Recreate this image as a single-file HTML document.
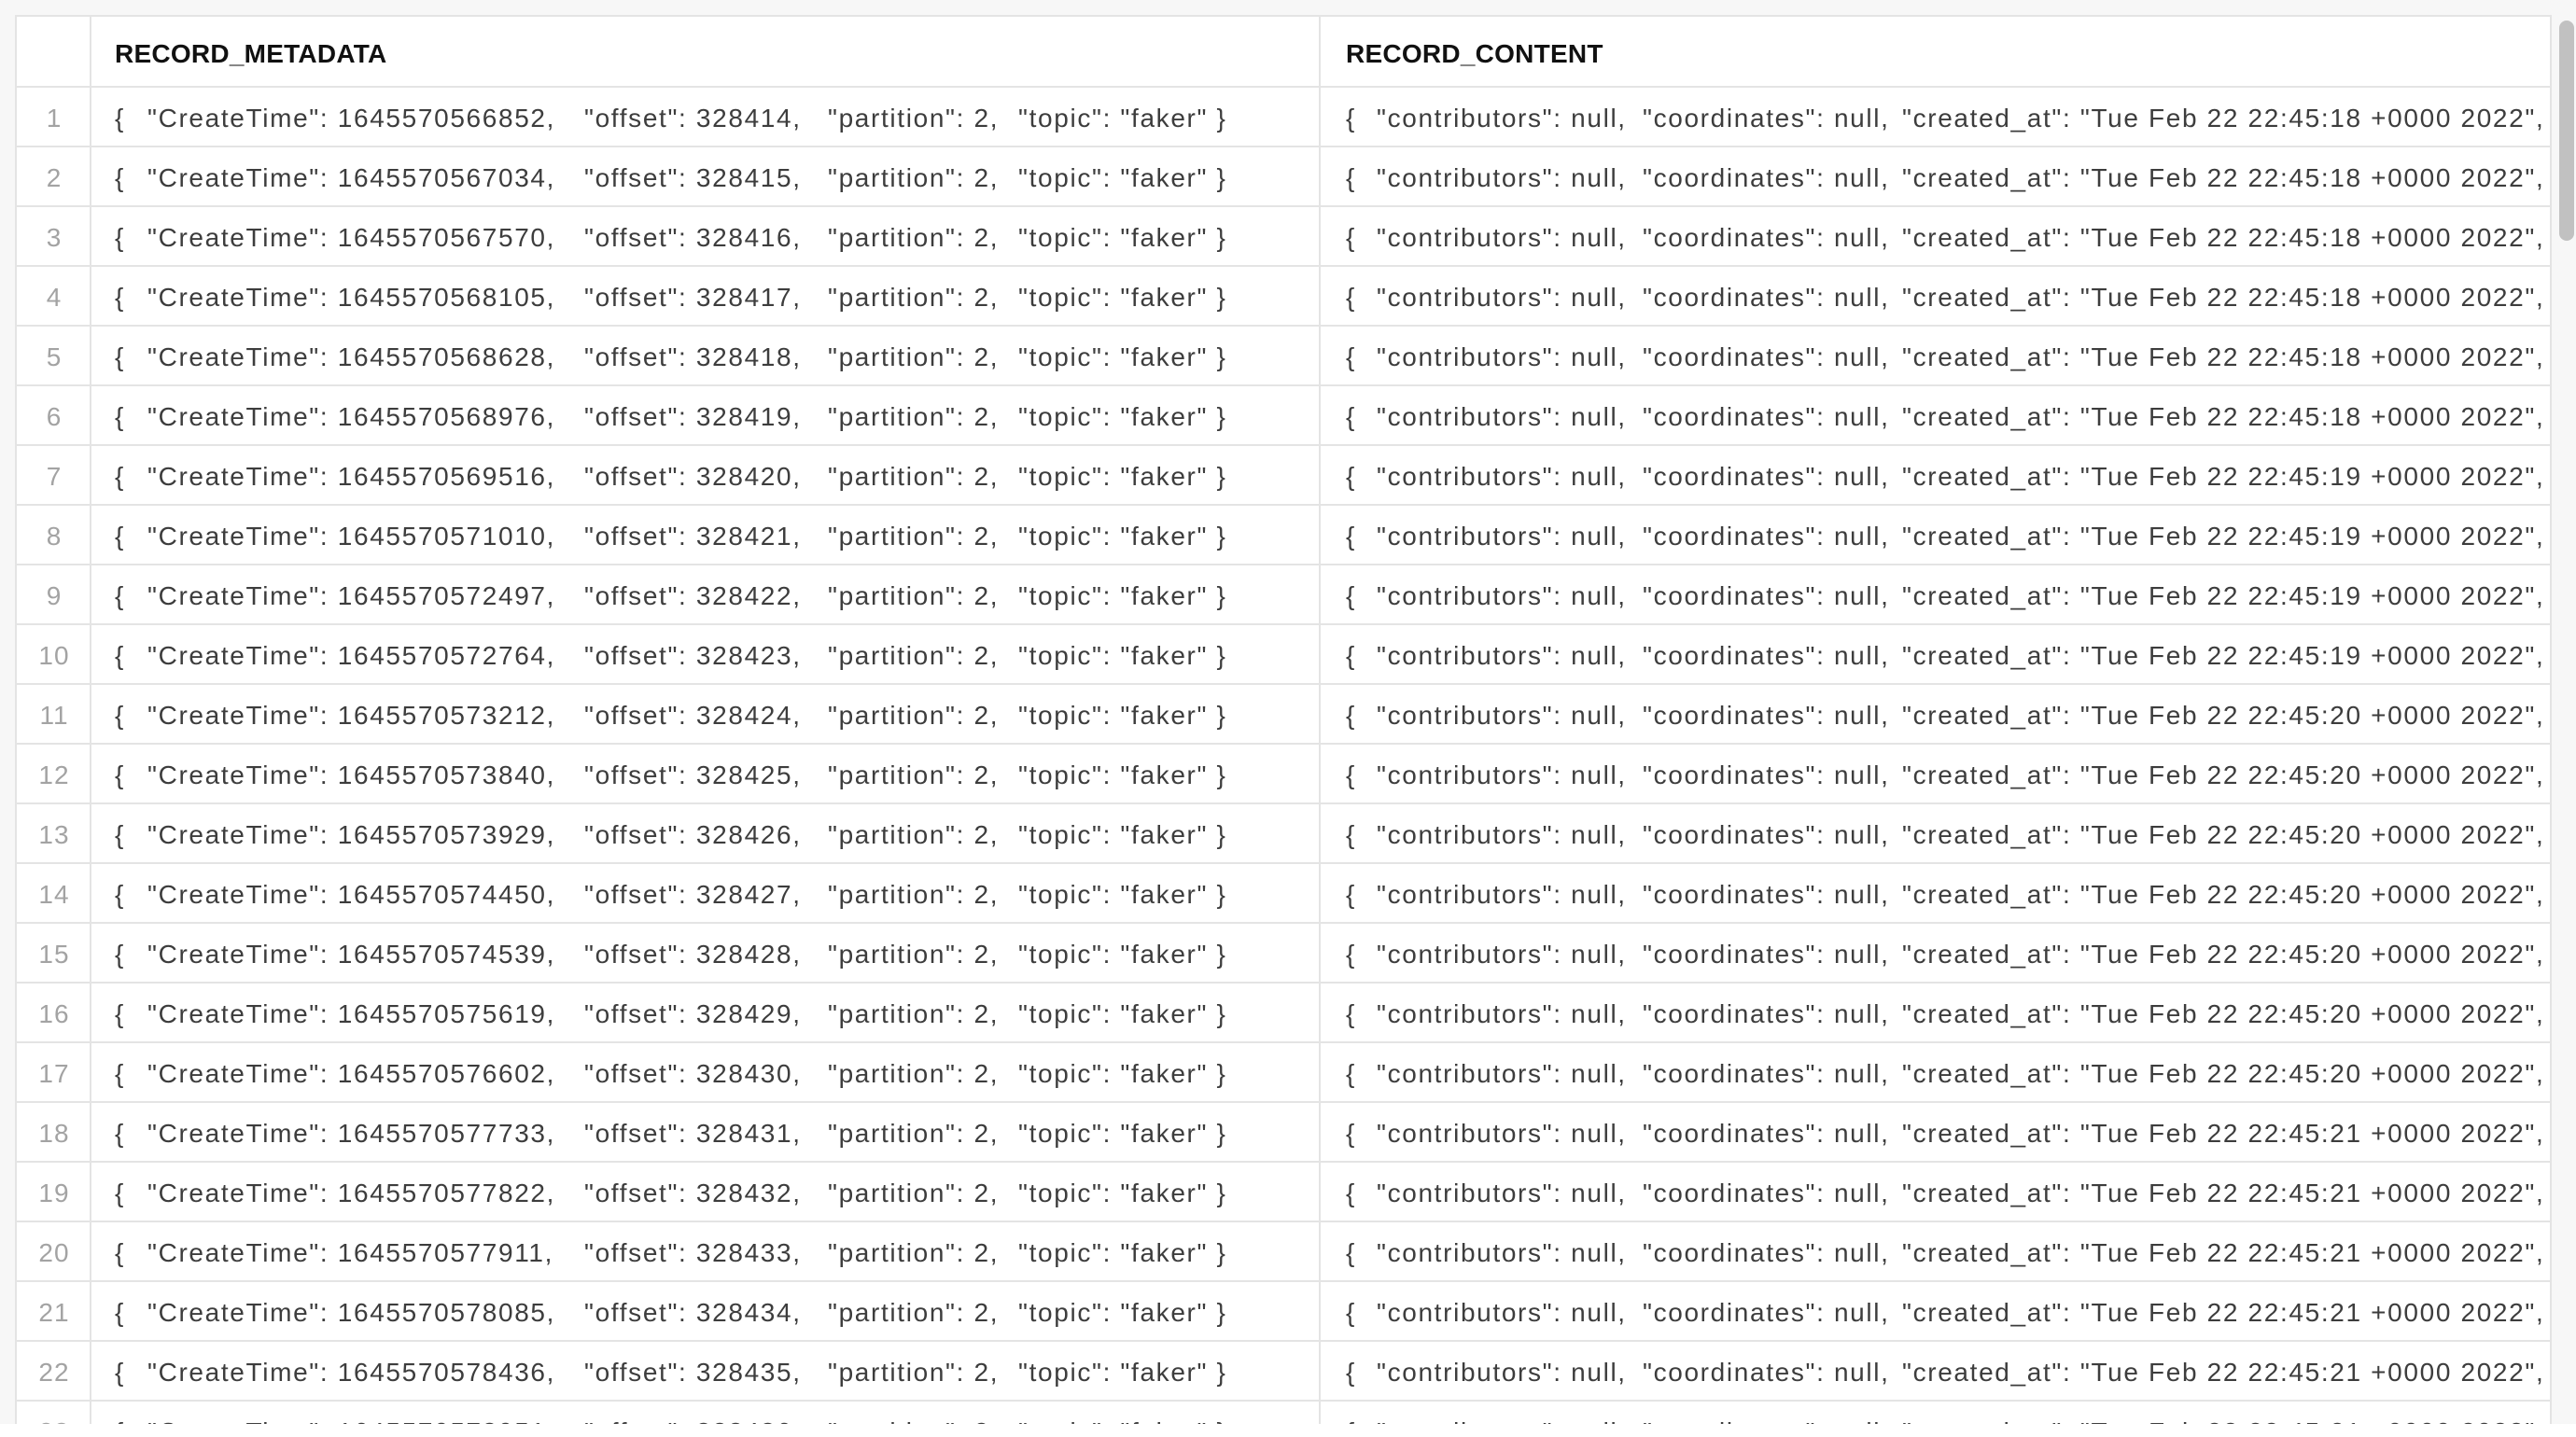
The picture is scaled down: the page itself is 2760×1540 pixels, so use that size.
<!DOCTYPE html>
<html><head><meta charset="utf-8"><style>
*{margin:0;padding:0;box-sizing:border-box}
body{width:2760px;height:1540px;background:#fff;position:relative;overflow:hidden;font-family:"Liberation Sans",sans-serif}
.bgtop{position:absolute;left:0;top:0;width:2760px;height:1526px;background:#f7f7f7}
.tbl{position:absolute;left:16px;top:16px;width:2718px;height:1510px;background:#fff;border:2px solid #e4e4e4;border-bottom:none;overflow:hidden}
.vl{position:absolute;top:0;bottom:0;width:2px;background:#e4e4e4}
.r{position:absolute;left:0;width:2718px;height:64px;border-bottom:2px solid #e4e4e4;font-size:28px;color:#3d3d3d;letter-spacing:1.65px}
.r span{position:absolute;top:17px;white-space:pre;line-height:32px}
.h{height:76px;top:0;font-weight:bold;color:#111;font-size:28px;letter-spacing:0.25px}
.h span{top:24px}
.n{left:0;width:80px;text-align:center;color:#a3a3a3;letter-spacing:1px}
.a{left:105px}.b{left:140px}.c{left:608px}.d{left:869px}.e{left:1073px}
.f{left:1424px}.g{left:1457px}.i{left:1742px}.j{left:2020px}
.sb{position:absolute;left:2742px;top:22px;width:16px;height:236px;border-radius:8px;background:#c1c1c1}
</style></head><body>
<div class="bgtop"></div>
<div class="tbl">
<div class="r h"><span class="a">RECORD_METADATA</span><span class="f">RECORD_CONTENT</span></div>
<div class="r" style="top:76px"><span class="n">1</span><span class="a">{</span><span class="b">"CreateTime": 1645570566852,</span><span class="c">"offset": 328414,</span><span class="d">"partition": 2,</span><span class="e">"topic": "faker" }</span><span class="f">{</span><span class="g">"contributors": null,</span><span class="i">"coordinates": null,</span><span class="j">"created_at": "Tue Feb 22 22:45:18 +0000 2022",</span></div>
<div class="r" style="top:140px"><span class="n">2</span><span class="a">{</span><span class="b">"CreateTime": 1645570567034,</span><span class="c">"offset": 328415,</span><span class="d">"partition": 2,</span><span class="e">"topic": "faker" }</span><span class="f">{</span><span class="g">"contributors": null,</span><span class="i">"coordinates": null,</span><span class="j">"created_at": "Tue Feb 22 22:45:18 +0000 2022",</span></div>
<div class="r" style="top:204px"><span class="n">3</span><span class="a">{</span><span class="b">"CreateTime": 1645570567570,</span><span class="c">"offset": 328416,</span><span class="d">"partition": 2,</span><span class="e">"topic": "faker" }</span><span class="f">{</span><span class="g">"contributors": null,</span><span class="i">"coordinates": null,</span><span class="j">"created_at": "Tue Feb 22 22:45:18 +0000 2022",</span></div>
<div class="r" style="top:268px"><span class="n">4</span><span class="a">{</span><span class="b">"CreateTime": 1645570568105,</span><span class="c">"offset": 328417,</span><span class="d">"partition": 2,</span><span class="e">"topic": "faker" }</span><span class="f">{</span><span class="g">"contributors": null,</span><span class="i">"coordinates": null,</span><span class="j">"created_at": "Tue Feb 22 22:45:18 +0000 2022",</span></div>
<div class="r" style="top:332px"><span class="n">5</span><span class="a">{</span><span class="b">"CreateTime": 1645570568628,</span><span class="c">"offset": 328418,</span><span class="d">"partition": 2,</span><span class="e">"topic": "faker" }</span><span class="f">{</span><span class="g">"contributors": null,</span><span class="i">"coordinates": null,</span><span class="j">"created_at": "Tue Feb 22 22:45:18 +0000 2022",</span></div>
<div class="r" style="top:396px"><span class="n">6</span><span class="a">{</span><span class="b">"CreateTime": 1645570568976,</span><span class="c">"offset": 328419,</span><span class="d">"partition": 2,</span><span class="e">"topic": "faker" }</span><span class="f">{</span><span class="g">"contributors": null,</span><span class="i">"coordinates": null,</span><span class="j">"created_at": "Tue Feb 22 22:45:18 +0000 2022",</span></div>
<div class="r" style="top:460px"><span class="n">7</span><span class="a">{</span><span class="b">"CreateTime": 1645570569516,</span><span class="c">"offset": 328420,</span><span class="d">"partition": 2,</span><span class="e">"topic": "faker" }</span><span class="f">{</span><span class="g">"contributors": null,</span><span class="i">"coordinates": null,</span><span class="j">"created_at": "Tue Feb 22 22:45:19 +0000 2022",</span></div>
<div class="r" style="top:524px"><span class="n">8</span><span class="a">{</span><span class="b">"CreateTime": 1645570571010,</span><span class="c">"offset": 328421,</span><span class="d">"partition": 2,</span><span class="e">"topic": "faker" }</span><span class="f">{</span><span class="g">"contributors": null,</span><span class="i">"coordinates": null,</span><span class="j">"created_at": "Tue Feb 22 22:45:19 +0000 2022",</span></div>
<div class="r" style="top:588px"><span class="n">9</span><span class="a">{</span><span class="b">"CreateTime": 1645570572497,</span><span class="c">"offset": 328422,</span><span class="d">"partition": 2,</span><span class="e">"topic": "faker" }</span><span class="f">{</span><span class="g">"contributors": null,</span><span class="i">"coordinates": null,</span><span class="j">"created_at": "Tue Feb 22 22:45:19 +0000 2022",</span></div>
<div class="r" style="top:652px"><span class="n">10</span><span class="a">{</span><span class="b">"CreateTime": 1645570572764,</span><span class="c">"offset": 328423,</span><span class="d">"partition": 2,</span><span class="e">"topic": "faker" }</span><span class="f">{</span><span class="g">"contributors": null,</span><span class="i">"coordinates": null,</span><span class="j">"created_at": "Tue Feb 22 22:45:19 +0000 2022",</span></div>
<div class="r" style="top:716px"><span class="n">11</span><span class="a">{</span><span class="b">"CreateTime": 1645570573212,</span><span class="c">"offset": 328424,</span><span class="d">"partition": 2,</span><span class="e">"topic": "faker" }</span><span class="f">{</span><span class="g">"contributors": null,</span><span class="i">"coordinates": null,</span><span class="j">"created_at": "Tue Feb 22 22:45:20 +0000 2022",</span></div>
<div class="r" style="top:780px"><span class="n">12</span><span class="a">{</span><span class="b">"CreateTime": 1645570573840,</span><span class="c">"offset": 328425,</span><span class="d">"partition": 2,</span><span class="e">"topic": "faker" }</span><span class="f">{</span><span class="g">"contributors": null,</span><span class="i">"coordinates": null,</span><span class="j">"created_at": "Tue Feb 22 22:45:20 +0000 2022",</span></div>
<div class="r" style="top:844px"><span class="n">13</span><span class="a">{</span><span class="b">"CreateTime": 1645570573929,</span><span class="c">"offset": 328426,</span><span class="d">"partition": 2,</span><span class="e">"topic": "faker" }</span><span class="f">{</span><span class="g">"contributors": null,</span><span class="i">"coordinates": null,</span><span class="j">"created_at": "Tue Feb 22 22:45:20 +0000 2022",</span></div>
<div class="r" style="top:908px"><span class="n">14</span><span class="a">{</span><span class="b">"CreateTime": 1645570574450,</span><span class="c">"offset": 328427,</span><span class="d">"partition": 2,</span><span class="e">"topic": "faker" }</span><span class="f">{</span><span class="g">"contributors": null,</span><span class="i">"coordinates": null,</span><span class="j">"created_at": "Tue Feb 22 22:45:20 +0000 2022",</span></div>
<div class="r" style="top:972px"><span class="n">15</span><span class="a">{</span><span class="b">"CreateTime": 1645570574539,</span><span class="c">"offset": 328428,</span><span class="d">"partition": 2,</span><span class="e">"topic": "faker" }</span><span class="f">{</span><span class="g">"contributors": null,</span><span class="i">"coordinates": null,</span><span class="j">"created_at": "Tue Feb 22 22:45:20 +0000 2022",</span></div>
<div class="r" style="top:1036px"><span class="n">16</span><span class="a">{</span><span class="b">"CreateTime": 1645570575619,</span><span class="c">"offset": 328429,</span><span class="d">"partition": 2,</span><span class="e">"topic": "faker" }</span><span class="f">{</span><span class="g">"contributors": null,</span><span class="i">"coordinates": null,</span><span class="j">"created_at": "Tue Feb 22 22:45:20 +0000 2022",</span></div>
<div class="r" style="top:1100px"><span class="n">17</span><span class="a">{</span><span class="b">"CreateTime": 1645570576602,</span><span class="c">"offset": 328430,</span><span class="d">"partition": 2,</span><span class="e">"topic": "faker" }</span><span class="f">{</span><span class="g">"contributors": null,</span><span class="i">"coordinates": null,</span><span class="j">"created_at": "Tue Feb 22 22:45:20 +0000 2022",</span></div>
<div class="r" style="top:1164px"><span class="n">18</span><span class="a">{</span><span class="b">"CreateTime": 1645570577733,</span><span class="c">"offset": 328431,</span><span class="d">"partition": 2,</span><span class="e">"topic": "faker" }</span><span class="f">{</span><span class="g">"contributors": null,</span><span class="i">"coordinates": null,</span><span class="j">"created_at": "Tue Feb 22 22:45:21 +0000 2022",</span></div>
<div class="r" style="top:1228px"><span class="n">19</span><span class="a">{</span><span class="b">"CreateTime": 1645570577822,</span><span class="c">"offset": 328432,</span><span class="d">"partition": 2,</span><span class="e">"topic": "faker" }</span><span class="f">{</span><span class="g">"contributors": null,</span><span class="i">"coordinates": null,</span><span class="j">"created_at": "Tue Feb 22 22:45:21 +0000 2022",</span></div>
<div class="r" style="top:1292px"><span class="n">20</span><span class="a">{</span><span class="b">"CreateTime": 1645570577911,</span><span class="c">"offset": 328433,</span><span class="d">"partition": 2,</span><span class="e">"topic": "faker" }</span><span class="f">{</span><span class="g">"contributors": null,</span><span class="i">"coordinates": null,</span><span class="j">"created_at": "Tue Feb 22 22:45:21 +0000 2022",</span></div>
<div class="r" style="top:1356px"><span class="n">21</span><span class="a">{</span><span class="b">"CreateTime": 1645570578085,</span><span class="c">"offset": 328434,</span><span class="d">"partition": 2,</span><span class="e">"topic": "faker" }</span><span class="f">{</span><span class="g">"contributors": null,</span><span class="i">"coordinates": null,</span><span class="j">"created_at": "Tue Feb 22 22:45:21 +0000 2022",</span></div>
<div class="r" style="top:1420px"><span class="n">22</span><span class="a">{</span><span class="b">"CreateTime": 1645570578436,</span><span class="c">"offset": 328435,</span><span class="d">"partition": 2,</span><span class="e">"topic": "faker" }</span><span class="f">{</span><span class="g">"contributors": null,</span><span class="i">"coordinates": null,</span><span class="j">"created_at": "Tue Feb 22 22:45:21 +0000 2022",</span></div>
<div class="r" style="top:1484px"><span class="n">23</span><span class="a">{</span><span class="b">"CreateTime": 1645570578951,</span><span class="c">"offset": 328436,</span><span class="d">"partition": 2,</span><span class="e">"topic": "faker" }</span><span class="f">{</span><span class="g">"contributors": null,</span><span class="i">"coordinates": null,</span><span class="j">"created_at": "Tue Feb 22 22:45:21 +0000 2022",</span></div>
<div class="vl" style="left:78px"></div>
<div class="vl" style="left:1395px"></div>
</div>
<div class="sb"></div>
</body></html>
